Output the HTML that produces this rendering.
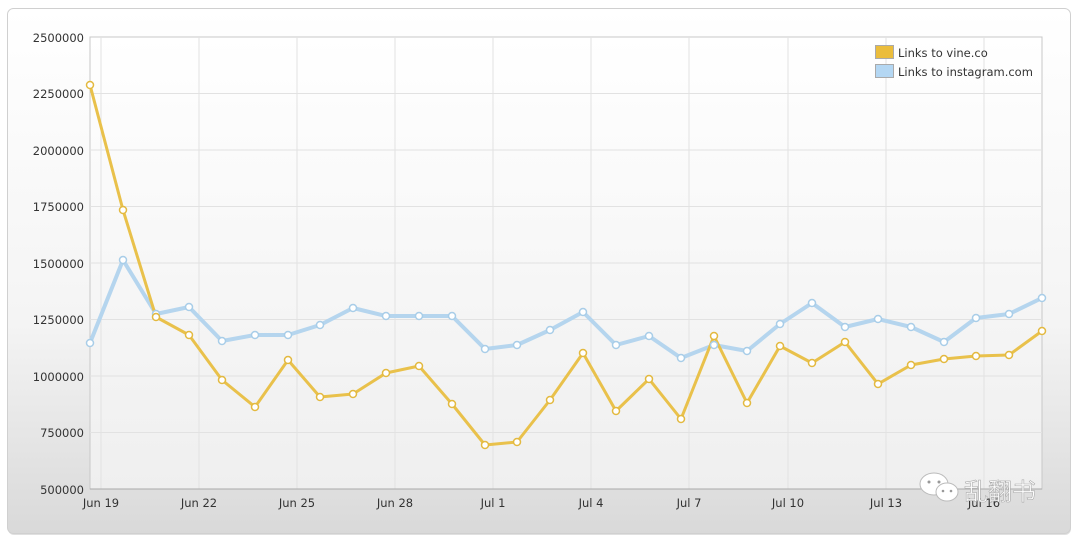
<!DOCTYPE html>
<html><head><meta charset="utf-8"><style>
html,body{margin:0;padding:0;background:#fff;width:1080px;height:540px;overflow:hidden}
</style></head><body>
<svg width="1080" height="540" xmlns="http://www.w3.org/2000/svg" font-family="DejaVu Sans, Liberation Sans, sans-serif">
<defs>
<linearGradient id="bg" x1="0" y1="0" x2="0" y2="1"><stop offset="0" stop-color="#ffffff"/><stop offset="0.6" stop-color="#f4f4f4"/><stop offset="1" stop-color="#d9d9d9"/></linearGradient>
<linearGradient id="pl" x1="0" y1="0" x2="0" y2="1"><stop offset="0" stop-color="#ffffff"/><stop offset="1" stop-color="#efefef"/></linearGradient>
</defs>
<rect x="8" y="10" width="1063" height="525" rx="6" fill="#ccc" opacity="0.6"/>
<rect x="7.5" y="8.5" width="1063" height="525" rx="6" fill="url(#bg)" stroke="#d0d0d0"/>
<rect x="90" y="37" width="952" height="452" fill="url(#pl)" stroke="#c8c8c8"/>
<g stroke="#e2e2e2" stroke-width="1">
<line x1="90" x2="1042" y1="93.5" y2="93.5"/><line x1="90" x2="1042" y1="150" y2="150"/><line x1="90" x2="1042" y1="206.5" y2="206.5"/><line x1="90" x2="1042" y1="263" y2="263"/><line x1="90" x2="1042" y1="319.5" y2="319.5"/><line x1="90" x2="1042" y1="376" y2="376"/><line x1="90" x2="1042" y1="432.5" y2="432.5"/>
<line y1="37" y2="489" x1="101" x2="101"/><line y1="37" y2="489" x1="199" x2="199"/><line y1="37" y2="489" x1="297" x2="297"/><line y1="37" y2="489" x1="395" x2="395"/><line y1="37" y2="489" x1="493" x2="493"/><line y1="37" y2="489" x1="591" x2="591"/><line y1="37" y2="489" x1="689" x2="689"/><line y1="37" y2="489" x1="788" x2="788"/><line y1="37" y2="489" x1="886" x2="886"/><line y1="37" y2="489" x1="984" x2="984"/>
</g>
<line x1="90" x2="1042" y1="489" y2="489" stroke="#aaa"/>
<g font-size="11.5" fill="#333" text-anchor="end">
<text x="84" y="42">2500000</text><text x="84" y="98">2250000</text><text x="84" y="155">2000000</text><text x="84" y="211">1750000</text><text x="84" y="268">1500000</text><text x="84" y="324">1250000</text><text x="84" y="381">1000000</text><text x="84" y="437">750000</text><text x="84" y="494">500000</text>
</g>
<g font-size="11.5" fill="#333" text-anchor="middle">
<text x="101" y="507">Jun 19</text><text x="199" y="507">Jun 22</text><text x="297" y="507">Jun 25</text><text x="395" y="507">Jun 28</text><text x="493" y="507">Jul 1</text><text x="591" y="507">Jul 4</text><text x="689" y="507">Jul 7</text><text x="788" y="507">Jul 10</text><text x="886" y="507">Jul 13</text><text x="984" y="507">Jul 16</text>
</g>
<polyline fill="none" stroke="#b5d5ee" stroke-width="4" stroke-linejoin="round" points="90,343 123,260 156,314 189,307 222,341 255,335 288,335 320,325 353,308 386,316 419,316 452,316 485,349 517,345 550,330 583,312 616,345 649,336 681,358 714,345 747,351 780,324 812,303 845,327 878,319 911,327 944,342 976,318 1009,314 1042,298"/>
<polyline fill="none" stroke="#e9c14b" stroke-width="3" stroke-linejoin="round" points="90,85 123,210 156,317 189,335 222,380 255,407 288,360 320,397 353,394 386,373 419,366 452,404 485,445 517,442 550,400 583,353 616,411 649,379 681,419 714,336 747,403 780,346 812,363 845,342 878,384 911,365 944,359 976,356 1009,355 1042,331"/>
<g fill="#fff" stroke="#a8cde8" stroke-width="1.5">
<circle cx="90" cy="343" r="3.5"/><circle cx="123" cy="260" r="3.5"/><circle cx="156" cy="314" r="3.5"/><circle cx="189" cy="307" r="3.5"/><circle cx="222" cy="341" r="3.5"/><circle cx="255" cy="335" r="3.5"/><circle cx="288" cy="335" r="3.5"/><circle cx="320" cy="325" r="3.5"/><circle cx="353" cy="308" r="3.5"/><circle cx="386" cy="316" r="3.5"/><circle cx="419" cy="316" r="3.5"/><circle cx="452" cy="316" r="3.5"/><circle cx="485" cy="349" r="3.5"/><circle cx="517" cy="345" r="3.5"/><circle cx="550" cy="330" r="3.5"/><circle cx="583" cy="312" r="3.5"/><circle cx="616" cy="345" r="3.5"/><circle cx="649" cy="336" r="3.5"/><circle cx="681" cy="358" r="3.5"/><circle cx="714" cy="345" r="3.5"/><circle cx="747" cy="351" r="3.5"/><circle cx="780" cy="324" r="3.5"/><circle cx="812" cy="303" r="3.5"/><circle cx="845" cy="327" r="3.5"/><circle cx="878" cy="319" r="3.5"/><circle cx="911" cy="327" r="3.5"/><circle cx="944" cy="342" r="3.5"/><circle cx="976" cy="318" r="3.5"/><circle cx="1009" cy="314" r="3.5"/><circle cx="1042" cy="298" r="3.5"/>
</g>
<g fill="#fff" stroke="#e3b93f" stroke-width="1.5">
<circle cx="90" cy="85" r="3.5"/><circle cx="123" cy="210" r="3.5"/><circle cx="156" cy="317" r="3.5"/><circle cx="189" cy="335" r="3.5"/><circle cx="222" cy="380" r="3.5"/><circle cx="255" cy="407" r="3.5"/><circle cx="288" cy="360" r="3.5"/><circle cx="320" cy="397" r="3.5"/><circle cx="353" cy="394" r="3.5"/><circle cx="386" cy="373" r="3.5"/><circle cx="419" cy="366" r="3.5"/><circle cx="452" cy="404" r="3.5"/><circle cx="485" cy="445" r="3.5"/><circle cx="517" cy="442" r="3.5"/><circle cx="550" cy="400" r="3.5"/><circle cx="583" cy="353" r="3.5"/><circle cx="616" cy="411" r="3.5"/><circle cx="649" cy="379" r="3.5"/><circle cx="681" cy="419" r="3.5"/><circle cx="714" cy="336" r="3.5"/><circle cx="747" cy="403" r="3.5"/><circle cx="780" cy="346" r="3.5"/><circle cx="812" cy="363" r="3.5"/><circle cx="845" cy="342" r="3.5"/><circle cx="878" cy="384" r="3.5"/><circle cx="911" cy="365" r="3.5"/><circle cx="944" cy="359" r="3.5"/><circle cx="976" cy="356" r="3.5"/><circle cx="1009" cy="355" r="3.5"/><circle cx="1042" cy="331" r="3.5"/>
</g>
<rect x="875.5" y="45.5" width="18" height="13" fill="#ebbd3c" stroke="#aaa"/>
<rect x="875.5" y="64.5" width="18" height="13" fill="#b4d7f3" stroke="#aaa"/>
<g font-size="11.5" fill="#333"><text x="898" y="57">Links to vine.co</text><text x="898" y="76">Links to instagram.com</text></g>
<g fill="#fff" stroke="#bbb" stroke-width="1">
<ellipse cx="934" cy="484" rx="14" ry="11"/><ellipse cx="947" cy="492" rx="11" ry="9"/>
</g>
<g fill="#999"><circle cx="929" cy="482" r="1.5"/><circle cx="939" cy="482" r="1.5"/><circle cx="943" cy="491" r="1.3"/><circle cx="951" cy="491" r="1.3"/></g>
<text x="964" y="500" font-size="24" fill="#fff" stroke="#aaa" stroke-width="0.6" font-family="Liberation Sans, Noto Sans CJK SC, sans-serif">乱翻书</text>
</svg>
</body></html>
